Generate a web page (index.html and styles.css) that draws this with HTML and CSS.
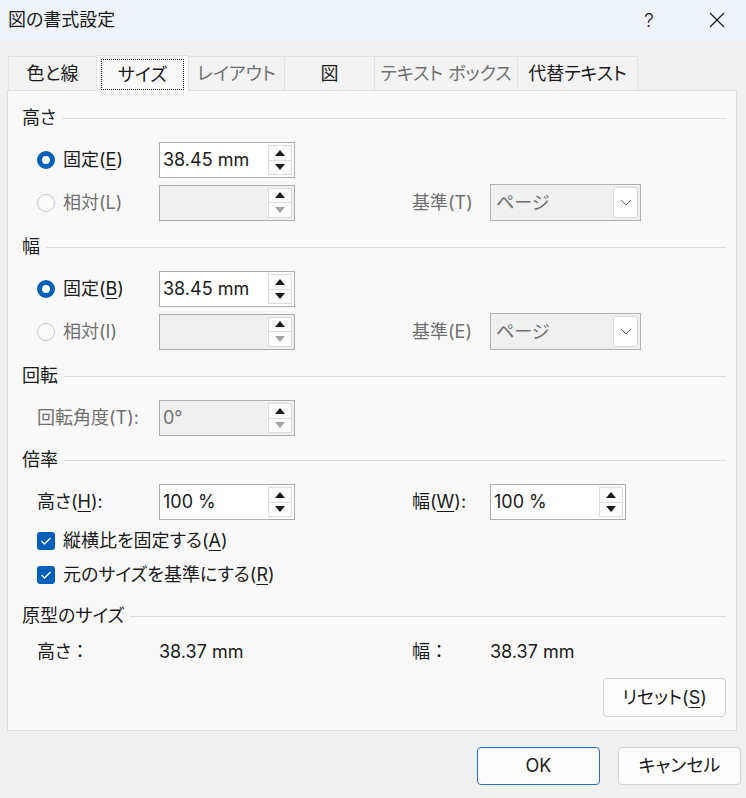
FILE: index.html
```html
<!DOCTYPE html>
<html lang="ja">
<head>
    <meta charset="UTF-8">
    <meta name="viewport" content="width=device-width, initial-scale=1.0">
    <title>図の書式設定</title>
    <link rel="stylesheet" href="styles.css">
</head>
<body>
    <div class="dialog">
        <!-- Title bar -->
        <header class="titlebar">
            <span class="title">図の書式設定</span>
            <span class="help">?</span>
            <span class="close">
                <svg width="16" height="16" viewBox="0 0 16 16"><path d="M1 1 L15 15 M15 1 L1 15" stroke="#1a1a1a" stroke-width="1.2" fill="none"/></svg>
            </span>
        </header>

        <!-- Tabs -->
        <nav class="tabs">
            <div class="tab tab-color">色と線</div>
            <div class="tab tab-size active"><span class="focus">サイズ</span></div>
            <div class="tab tab-layout off">レイアウト</div>
            <div class="tab tab-pic">図</div>
            <div class="tab tab-textbox off">テキスト ボックス</div>
            <div class="tab tab-alt">代替テキスト</div>
        </nav>

        <section class="panel">
            <div class="group">
                <div class="group-title">高さ</div>
                <div class="rows">
                    <div class="row">
                        <label class="opt"><span class="radio checked"></span>固定(<u>E</u>)</label>
                        <div class="spin">
                            <span class="spin-value">38.45 mm</span>
                            <span class="spin-btns"><span class="sbtn"><i class="arrow-up"></i></span><span class="sbtn"><i class="arrow-down"></i></span></span>
                        </div>
                    </div>
                    <div class="row">
                        <label class="opt off"><span class="radio"></span>相対(L)</label>
                        <div class="spin disabled">
                            <span class="spin-value"></span>
                            <span class="spin-btns"><span class="sbtn"><i class="arrow-up"></i></span><span class="sbtn"><i class="arrow-down off"></i></span></span>
                        </div>
                        <span></span>
                        <span class="label off">基準(T)</span>
                        <div class="combo">
                            <span class="combo-value">ページ</span>
                            <span class="combo-btn"><svg width="12" height="7" viewBox="0 0 12 7"><path d="M1 1 L6 6 L11 1" stroke="#6a6a6a" stroke-width="1" fill="none"/></svg></span>
                        </div>
                    </div>
                </div>
            </div>

            <div class="group">
                <div class="group-title">幅</div>
                <div class="rows">
                    <div class="row">
                        <label class="opt"><span class="radio checked"></span>固定(<u>B</u>)</label>
                        <div class="spin">
                            <span class="spin-value">38.45 mm</span>
                            <span class="spin-btns"><span class="sbtn"><i class="arrow-up"></i></span><span class="sbtn"><i class="arrow-down"></i></span></span>
                        </div>
                    </div>
                    <div class="row">
                        <label class="opt off"><span class="radio"></span>相対(I)</label>
                        <div class="spin disabled">
                            <span class="spin-value"></span>
                            <span class="spin-btns"><span class="sbtn"><i class="arrow-up"></i></span><span class="sbtn"><i class="arrow-down off"></i></span></span>
                        </div>
                        <span></span>
                        <span class="label off">基準(E)</span>
                        <div class="combo">
                            <span class="combo-value">ページ</span>
                            <span class="combo-btn"><svg width="12" height="7" viewBox="0 0 12 7"><path d="M1 1 L6 6 L11 1" stroke="#6a6a6a" stroke-width="1" fill="none"/></svg></span>
                        </div>
                    </div>
                </div>
            </div>

            <div class="group">
                <div class="group-title">回転</div>
                <div class="rows">
                    <div class="row">
                        <span class="label off">回転角度(T):</span>
                        <div class="spin disabled">
                            <span class="spin-value off">0°</span>
                            <span class="spin-btns"><span class="sbtn"><i class="arrow-up"></i></span><span class="sbtn"><i class="arrow-down off"></i></span></span>
                        </div>
                    </div>
                </div>
            </div>

            <div class="group group-scale">
                <div class="group-title">倍率</div>
                <div class="rows">
                    <div class="row">
                        <span class="label">高さ(<u>H</u>):</span>
                        <div class="spin">
                            <span class="spin-value">100 %</span>
                            <span class="spin-btns"><span class="sbtn"><i class="arrow-up"></i></span><span class="sbtn"><i class="arrow-down"></i></span></span>
                        </div>
                        <span></span>
                        <span class="label">幅(<u>W</u>):</span>
                        <div class="spin">
                            <span class="spin-value">100 %</span>
                            <span class="spin-btns"><span class="sbtn"><i class="arrow-up"></i></span><span class="sbtn"><i class="arrow-down"></i></span></span>
                        </div>
                    </div>
                </div>
                <div class="checks">
                    <label class="check-row"><span class="checkbox"><svg width="12" height="10" viewBox="0 0 12 10"><path d="M1.5 5 L4.5 8 L10.5 2" stroke="#fff" stroke-width="1.3" fill="none"/></svg></span>縦横比を固定する(<u>A</u>)</label>
                    <label class="check-row"><span class="checkbox"><svg width="12" height="10" viewBox="0 0 12 10"><path d="M1.5 5 L4.5 8 L10.5 2" stroke="#fff" stroke-width="1.3" fill="none"/></svg></span>元のサイズを基準にする(<u>R</u>)</label>
                </div>
            </div>

            <div class="group">
                <div class="group-title">原型のサイズ</div>
                <div class="row row-info">
                    <span class="label">高さ<span class="fw">：</span></span>
                    <span class="value">38.37 mm</span>
                    <span></span>
                    <span class="label">幅<span class="fw">：</span></span>
                    <span class="value">38.37 mm</span>
                </div>
            </div>

            <div class="reset-row">
                <button class="btn">リセット(<u>S</u>)</button>
            </div>
        </section>

        <footer class="footer">
            <button class="btn btn-default">OK</button>
            <button class="btn">キャンセル</button>
        </footer>
    </div>
</body>
</html>
```

FILE: styles.css
```css
/* Base */
body {
    margin: 0;
    width: 746px;
    height: 798px;
    overflow: hidden;
    background: #f0f0f0;
    font-family: Inter, "Noto Sans CJK JP", sans-serif;
    font-size: 18px;
    font-feature-settings: "palt";
    color: #1a1a1a;
}

u {
    text-decoration-thickness: 1px;
    text-underline-offset: 3px;
}

.off {
    color: #707070;
}

.fw {
    font-feature-settings: normal;
}

/* Title bar */
.titlebar {
    height: 40px;
    background: #eef3f9;
    display: flex;
    align-items: center;
    padding-left: 8px;
}

.title {
    flex: 1;
    line-height: 24px;
}

.help {
    width: 20px;
    text-align: center;
    margin-right: 50px;
    font-size: 19px;
    font-weight: 300;
}

.close {
    display: flex;
    margin-right: 21px;
}

/* Tabs */
.tabs {
    display: flex;
    align-items: flex-end;
    margin: 15px 0 0 8px;
    height: 35px;
}

.tab {
    height: 34px;
    box-sizing: border-box;
    border: 1px solid #e2e2e2;
    border-bottom: none;
    margin-right: -1px;
    background: #f3f3f3;
    display: flex;
    align-items: center;
    justify-content: center;
    line-height: 24px;
}

.tab.active {
    height: 36px;
    margin-bottom: -1px;
    background: #f9f9f9;
    position: relative;
    z-index: 1;
}

.tab .focus {
    border: 1px dotted #1a1a1a;
    width: 81px;
    height: 29px;
    display: flex;
    align-items: center;
    justify-content: center;
    margin-top: 2px;
}

.tab-color { width: 89px; }
.tab-size { width: 93px; }
.tab-layout { width: 97px; }
.tab-pic { width: 91px; }
.tab-textbox { width: 144px; }
.tab-alt { width: 121px; }

/* Panel */
.panel {
    margin-left: 7px;
    width: 730px;
    box-sizing: border-box;
    border: 1px solid #dcdcdc;
    background: #f9f9f9;
    padding: 16px 10px 13px 14px;
}

.group + .group {
    margin-top: 16px;
}

.group.group-scale {
    margin-top: 13px;
}

.group-title {
    display: flex;
    align-items: center;
    height: 22px;
    line-height: 22px;
}

.group-title::after {
    content: "";
    flex: 1;
    height: 1px;
    background: #dcdcdc;
    margin-left: 6px;
}

.rows {
    margin-top: 13px;
    display: flex;
    flex-direction: column;
    gap: 6px;
}

.row {
    display: grid;
    grid-template-columns: 122px 136px 117px 78px 151px;
    align-items: center;
    height: 36px;
    padding-left: 15px;
}

.row-info {
    height: 24px;
    margin-top: 13px;
}

.opt, .label, .value {
    display: flex;
    align-items: center;
    line-height: 24px;
    white-space: nowrap;
}

/* Radio */
.radio {
    width: 18px;
    height: 18px;
    box-sizing: border-box;
    border-radius: 50%;
    border: 1px solid #c6c6c6;
    background: #fbfbfb;
    margin-right: 8px;
}

.radio.checked {
    border: 5px solid #005fb8;
    background: #fff;
}

/* Spin box */
.spin {
    width: 136px;
    height: 36px;
    box-sizing: border-box;
    border: 1px solid #adadad;
    background: #fff;
    display: flex;
    padding: 2px 2px 2px 0;
}

.spin.disabled {
    background: #f0f0f0;
}

.spin-value {
    flex: 1;
    padding-left: 3px;
    line-height: 30px;
}

.spin-btns {
    display: flex;
    flex-direction: column;
    width: 24px;
}

.sbtn {
    flex: 1;
    box-sizing: border-box;
    border: 1px solid #dcdcdc;
    background: #fcfcfc;
    display: flex;
    align-items: center;
    justify-content: center;
}

.sbtn + .sbtn {
    border-top: none;
}

.arrow-up {
    border-left: 5px solid transparent;
    border-right: 5px solid transparent;
    border-bottom: 6px solid #1a1a1a;
}

.arrow-down {
    border-left: 5px solid transparent;
    border-right: 5px solid transparent;
    border-top: 6px solid #1a1a1a;
}

.arrow-down.off {
    border-top-color: #a3a3a3;
}

/* Combo box */
.combo {
    height: 37px;
    box-sizing: border-box;
    border: 1px solid #b0b0b0;
    background: #f0f0f0;
    display: flex;
    align-items: center;
    padding: 2px;
}

.combo-value {
    flex: 1;
    padding-left: 3px;
    color: #707070;
    line-height: 24px;
}

.combo-btn {
    width: 25px;
    height: 31px;
    box-sizing: border-box;
    border: 1px solid #dadada;
    border-radius: 3px;
    background: #fff;
    display: flex;
    align-items: center;
    justify-content: center;
}

/* Checkboxes */
.checks {
    margin-top: 7px;
    display: flex;
    flex-direction: column;
    gap: 6px;
    padding-left: 15px;
}

.check-row {
    height: 28px;
    display: flex;
    align-items: center;
    line-height: 24px;
}

.checkbox {
    width: 18px;
    height: 18px;
    border-radius: 3px;
    background: #005fb8;
    display: flex;
    align-items: center;
    justify-content: center;
    margin-right: 8px;
}

/* Buttons */
.reset-row {
    display: flex;
    justify-content: flex-end;
    margin-top: 14px;
}

.btn {
    width: 123px;
    height: 39px;
    box-sizing: border-box;
    border: 1px solid #d0d0d0;
    border-radius: 4px;
    background: #fdfdfd;
    font: inherit;
    color: #1a1a1a;
    padding: 0;
    line-height: 24px;
}

.footer {
    display: flex;
    justify-content: flex-end;
    gap: 18px;
    margin-top: 16px;
    padding-right: 5px;
}

.footer .btn {
    height: 38px;
}

.btn-default {
    border-color: #2a6fbd;
}
```
